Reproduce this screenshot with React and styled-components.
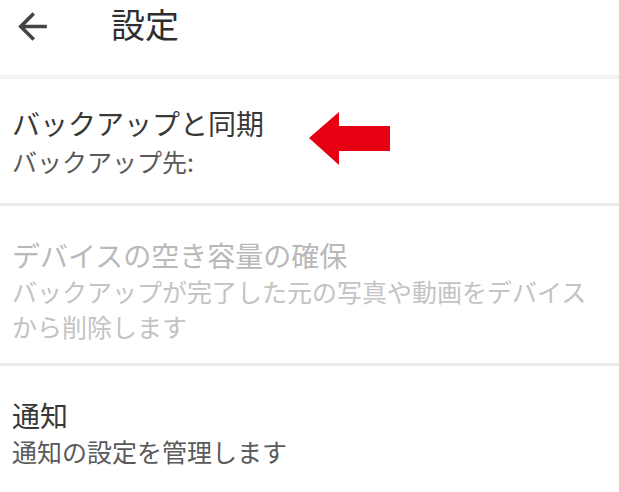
import React from 'react';
import styled, { createGlobalStyle } from 'styled-components';

const GlobalStyle = createGlobalStyle`
  html, body {
    margin: 0;
    padding: 0;
    background: #ffffff;
  }
  body {
    font-family: "Noto Sans CJK JP", "Noto Sans", sans-serif;
  }
`;

const Page = styled.div`
  width: 619px;
  height: 492px;
  overflow: hidden;
  background: #ffffff;
`;

const Header = styled.header`
  display: flex;
  align-items: center;
  height: 79px;
  box-sizing: border-box;
  padding: 0 0 27px 11px;
  border-bottom: 4px solid #f3f3f3;
`;

const BackButton = styled.button`
  display: flex;
  width: 43px;
  height: 43px;
  margin-top: 4px;
  padding: 0;
  border: none;
  background: none;
  color: #444444;
`;

const Title = styled.h1`
  margin: 0 0 0 57px;
  font-size: 34px;
  font-weight: 400;
  line-height: 48px;
  color: #2f2f2f;
`;

const Section = styled.section`
  position: relative;
  padding: ${(p) => p.$top || 0}px 20px ${(p) => p.$bottom || 0}px 12px;
  border-bottom: ${(p) => (p.$last ? 'none' : '3px solid #ececec')};
`;

const ItemTitle = styled.div`
  font-size: 28px;
  line-height: 36px;
  color: ${(p) => (p.$disabled ? '#b9b9b9' : '#383838')};
`;

const ItemText = styled.div`
  margin-top: ${(p) => p.$gap}px;
  font-size: 25px;
  line-height: 35px;
  color: ${(p) => (p.$disabled ? '#c3c3c3' : '#5a5a5a')};
`;

const Pointer = styled.svg`
  position: absolute;
  left: 309px;
  top: 33px;
`;

const BackIcon = () => (
  <svg width="43" height="43" viewBox="0 0 24 24" fill="currentColor">
    <path d="M20 11H7.83l5.59-5.59L12 4l-8 8 8 8 1.41-1.41L7.83 13H20v-2z" />
  </svg>
);

export default function App() {
  return (
    <Page>
      <GlobalStyle />
      <Header>
        <BackButton aria-label="戻る">
          <BackIcon />
        </BackButton>
        <Title>設定</Title>
      </Header>

      <Section $top={26} $bottom={24}>
        <ItemTitle>バックアップと同期</ItemTitle>
        <ItemText $gap={3}>バックアップ先:</ItemText>
        <Pointer width="81" height="53" viewBox="0 0 81 53">
          <polygon points="0,26 30,0 30,14 81,14 81,39 30,39 30,53" fill="#e60012" />
        </Pointer>
      </Section>

      <Section $top={31} $bottom={19}>
        <ItemTitle $disabled>デバイスの空き容量の確保</ItemTitle>
        <ItemText $disabled $gap={1}>
          バックアップが完了した元の写真や動画をデバイスから削除します
        </ItemText>
      </Section>

      <Section $top={31} $bottom={20} $last>
        <ItemTitle>通知</ItemTitle>
        <ItemText $gap={1}>通知の設定を管理します</ItemText>
      </Section>
    </Page>
  );
}
